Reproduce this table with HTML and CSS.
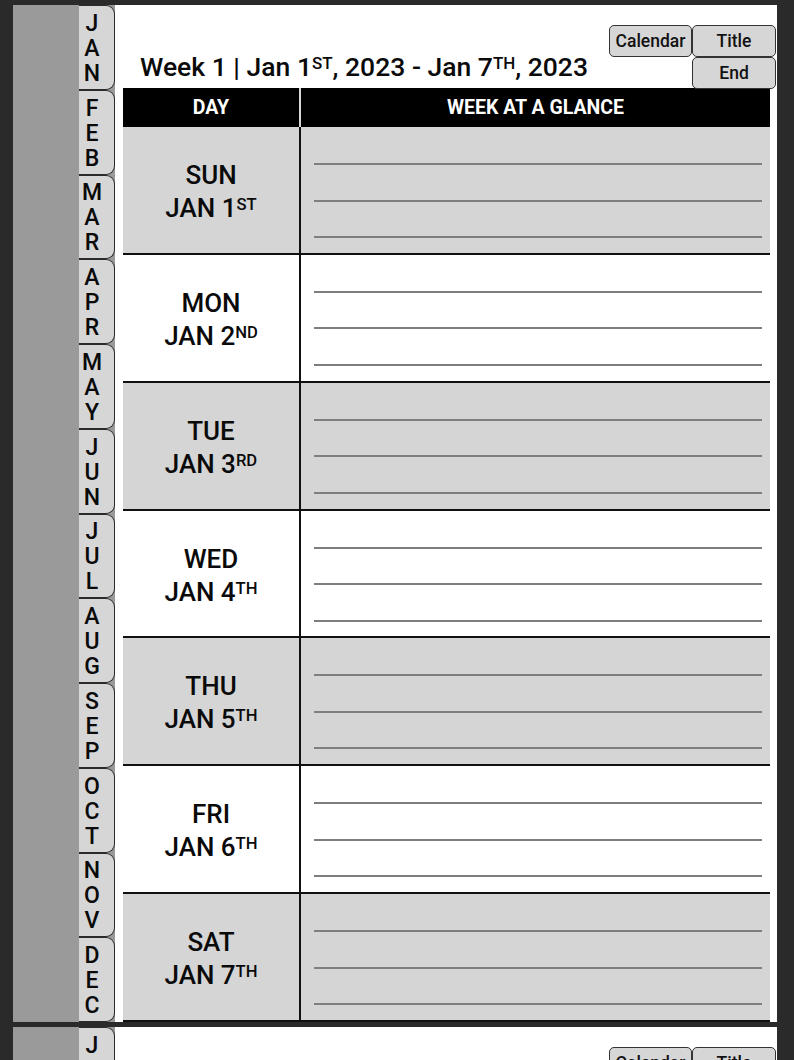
FILE: index.html
```html
<!DOCTYPE html>
<html lang="en">
<head>
<meta charset="utf-8">
<title>Weekly Planner</title>
<link rel="stylesheet" href="styles.css">
</head>
<body>
<div class="sheet">
  <div class="rail"></div>
  <nav class="tabs">
    <div class="tab"><span>J</span><span>A</span><span>N</span></div>
    <div class="tab"><span>F</span><span>E</span><span>B</span></div>
    <div class="tab"><span>M</span><span>A</span><span>R</span></div>
    <div class="tab"><span>A</span><span>P</span><span>R</span></div>
    <div class="tab"><span>M</span><span>A</span><span>Y</span></div>
    <div class="tab"><span>J</span><span>U</span><span>N</span></div>
    <div class="tab"><span>J</span><span>U</span><span>L</span></div>
    <div class="tab"><span>A</span><span>U</span><span>G</span></div>
    <div class="tab"><span>S</span><span>E</span><span>P</span></div>
    <div class="tab"><span>O</span><span>C</span><span>T</span></div>
    <div class="tab"><span>N</span><span>O</span><span>V</span></div>
    <div class="tab"><span>D</span><span>E</span><span>C</span></div>
  </nav>
  <main class="page">
    <header class="head">
      <h1 class="title">Week 1 | Jan 1<span class="sup">ST</span>, 2023 - Jan 7<span class="sup">TH</span>, 2023</h1>
      <div class="btns">
        <div class="btn b-cal">Calendar</div>
        <div class="btn b-title">Title</div>
        <div class="btn b-end">End</div>
      </div>
    </header>
    <section class="table">
      <div class="thead">
        <div class="th th-day">DAY</div>
        <div class="th th-week">WEEK AT A GLANCE</div>
      </div>
      <div class="row shade">
        <div class="day"><span>SUN</span><span>JAN 1<span class="sup">ST</span></span></div>
        <div class="notes"><i></i><i></i><i></i></div>
      </div>
      <div class="row">
        <div class="day"><span>MON</span><span>JAN 2<span class="sup">ND</span></span></div>
        <div class="notes"><i></i><i></i><i></i></div>
      </div>
      <div class="row shade">
        <div class="day"><span>TUE</span><span>JAN 3<span class="sup">RD</span></span></div>
        <div class="notes"><i></i><i></i><i></i></div>
      </div>
      <div class="row">
        <div class="day"><span>WED</span><span>JAN 4<span class="sup">TH</span></span></div>
        <div class="notes"><i></i><i></i><i></i></div>
      </div>
      <div class="row shade">
        <div class="day"><span>THU</span><span>JAN 5<span class="sup">TH</span></span></div>
        <div class="notes"><i></i><i></i><i></i></div>
      </div>
      <div class="row">
        <div class="day"><span>FRI</span><span>JAN 6<span class="sup">TH</span></span></div>
        <div class="notes"><i></i><i></i><i></i></div>
      </div>
      <div class="row shade">
        <div class="day"><span>SAT</span><span>JAN 7<span class="sup">TH</span></span></div>
        <div class="notes"><i></i><i></i><i></i></div>
      </div>
    </section>
  </main>
</div>

<div class="sheet">
  <div class="rail"></div>
  <nav class="tabs">
    <div class="tab"><span>J</span><span>A</span><span>N</span></div>
    <div class="tab"><span>F</span><span>E</span><span>B</span></div>
    <div class="tab"><span>M</span><span>A</span><span>R</span></div>
    <div class="tab"><span>A</span><span>P</span><span>R</span></div>
    <div class="tab"><span>M</span><span>A</span><span>Y</span></div>
    <div class="tab"><span>J</span><span>U</span><span>N</span></div>
    <div class="tab"><span>J</span><span>U</span><span>L</span></div>
    <div class="tab"><span>A</span><span>U</span><span>G</span></div>
    <div class="tab"><span>S</span><span>E</span><span>P</span></div>
    <div class="tab"><span>O</span><span>C</span><span>T</span></div>
    <div class="tab"><span>N</span><span>O</span><span>V</span></div>
    <div class="tab"><span>D</span><span>E</span><span>C</span></div>
  </nav>
  <main class="page">
    <header class="head">
      <h1 class="title">Week 2 | Jan 8<span class="sup">TH</span>, 2023 - Jan 14<span class="sup">TH</span>, 2023</h1>
      <div class="btns">
        <div class="btn b-cal">Calendar</div>
        <div class="btn b-title">Title</div>
        <div class="btn b-end">End</div>
      </div>
    </header>
  </main>
</div>
</body>
</html>
```

FILE: styles.css
```css
* { box-sizing: border-box; }

html, body {
  margin: 0;
  padding: 0;
}

body {
  background: #2a2a2a;
  font-family: Roboto, "Liberation Sans", sans-serif;
  color: #111;
  overflow: hidden;
  padding-top: 5px;
}

.sheet {
  display: flex;
  width: 764px;
  height: 1017px;
  margin-left: 13px;
  margin-bottom: 5px;
}

.rail {
  width: 66px;
  background: #9a9a9a;
  flex: none;
}

.tabs {
  width: 36px;
  flex: none;
  display: flex;
  flex-direction: column;
  background: #9a9a9a;
}

.tab {
  flex: 1;
  background: #d6d6d6;
  border: 1px solid #2a2a2a;
  border-left: none;
  border-radius: 0 9px 9px 0;
  display: flex;
  flex-direction: column;
  align-items: center;
  justify-content: center;
  padding-right: 9px;
  padding-top: 2px;
  font-size: 23px;
  font-weight: 500;
  line-height: 25px;
  color: #0a0a0a;
}

.page {
  flex: 1;
  background: #fff;
  display: flex;
  flex-direction: column;
  padding: 0 7px 0 8px;
}

.head {
  height: 83px;
  flex: none;
  display: flex;
  justify-content: space-between;
  align-items: flex-start;
}

.title {
  align-self: flex-end;
  margin: 0 0 6px 17px;
  font-size: 26.5px;
  line-height: 30px;
  font-weight: 500;
  color: #0a0a0a;
  white-space: nowrap;
}

.sup {
  font-size: 0.64em;
  vertical-align: 0.4em;
  line-height: 0;
}

.btns {
  margin-top: 20px;
  margin-right: -6px;
  display: grid;
  grid-template-columns: 83px 84px;
  grid-template-rows: 32px 32px;
  position: relative;
  z-index: 1;
}

.btn {
  background: #d6d6d6;
  border: 1px solid #333;
  border-radius: 5px;
  font-size: 17.5px;
  font-weight: 500;
  display: flex;
  align-items: center;
  justify-content: center;
  color: #111;
}

.b-cal { grid-column: 1; grid-row: 1; }
.b-title { grid-column: 2; grid-row: 1; }
.b-end { grid-column: 2; grid-row: 2; }

.table {
  flex: 1;
  display: flex;
  flex-direction: column;
}

.thead {
  height: 39px;
  flex: none;
  display: flex;
  background: #000;
  color: #fff;
}

.th {
  display: flex;
  align-items: center;
  justify-content: center;
  font-size: 19.5px;
  font-weight: 700;
}

.th-day {
  width: 178px;
  border-right: 2px solid #d8d8d8;
}

.th-week {
  flex: 1;
}

.row {
  flex: 1;
  display: flex;
  border-bottom: 2px solid #111;
  background: #fff;
}

.row.shade {
  background: #d5d5d5;
}

.day {
  width: 178px;
  border-right: 2px solid #111;
  display: flex;
  flex-direction: column;
  align-items: center;
  justify-content: center;
  text-align: center;
  font-size: 26px;
  line-height: 33px;
  font-weight: 500;
  color: #0a0a0a;
  padding-top: 4px;
}

.notes {
  flex: 1;
  display: flex;
  flex-direction: column;
  gap: 34.5px;
  padding: 36px 8px 0 13px;
}

.notes i {
  display: block;
  height: 2px;
  background: #7e7e7e;
}
```
